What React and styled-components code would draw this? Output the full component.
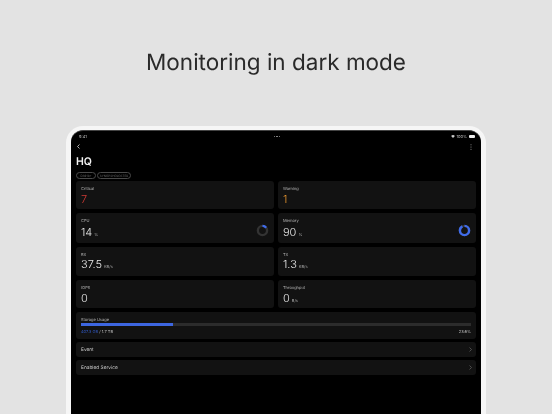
import React from "react";
import styled, { createGlobalStyle } from "styled-components";

const Global = createGlobalStyle`
  html, body { margin: 0; padding: 0; width: 552px; height: 414px; overflow: hidden; background: #e3e3e3; }
  * { box-sizing: border-box; }
  #root { width: 552px; height: 414px; overflow: hidden; text-rendering: geometricPrecision; }
`;

const Page = styled.div`
  width: 552px;
  height: 414px;
  overflow: hidden;
  display: flex;
  flex-direction: column;
  align-items: center;
  font-family: Inter, "Liberation Sans", sans-serif;
`;
const Heading = styled.h1`
  margin: 48px 0 0;
  height: 30px;
  font-size: 22.5px;
  line-height: 30px;
  font-weight: 400;
  letter-spacing: 0;
  color: #2a2a2a;
  will-change: opacity;
`;
const Bezel = styled.div`
  margin-top: 48px;
  width: 420px;
  height: 320px;
  flex: none;
  padding: 4px 5px 0;
  background: #f6f6f6;
  border-radius: 17px 17px 0 0;
`;
const Screen = styled.div`
  height: 100%;
  background: #000;
  border-radius: 12px 12px 0 0;
  border-top: 1px solid #444;
  padding: 0 5px;
  display: flex;
  flex-direction: column;
`;
const StatusBar = styled.div`
  height: 10px;
  padding: 1px 1px 0 3px;
  display: grid;
  grid-template-columns: 1fr auto 1fr;
  align-items: center;
  color: #bbb;
  font-size: 4px;
  will-change: opacity;
`;
const Dots = styled.div`
  display: flex;
  gap: 1px;
  & > i { width: 1.5px; height: 1.5px; border-radius: 50%; background: #999; }
`;
const StatusRight = styled.div`
  display: flex;
  align-items: center;
  justify-content: flex-end;
  gap: 1.5px;
`;
const Battery = styled.div`
  width: 6.5px;
  height: 3px;
  background: #eee;
  border-radius: 1px;
`;
const NavBar = styled.div`
  height: 10px;
  display: flex;
  align-items: center;
  justify-content: space-between;
  padding: 1px 4px 0 1px;
`;
const Title = styled.div`
  margin-top: 2px;
  height: 16px;
  font-size: 10.5px;
  line-height: 17px;
  font-weight: 600;
  color: #f2f2f2;
  will-change: opacity;
`;
const Chips = styled.div`
  margin-top: 3px;
  display: flex;
  gap: 1px;
  height: 7px;
  will-change: opacity;
`;
const Chip = styled.div`
  height: 7px;
  width: ${(p) => p.$w}px;
  text-align: center;
  border: 0.5px solid #4a4a4a;
  border-radius: 4px;
  color: #6a6a6a;
  font-size: 3px;
  line-height: 6px;
  white-space: nowrap;
`;
const Grid = styled.div`
  margin-top: 2px;
  display: grid;
  grid-template-columns: 198px 198px;
  grid-template-rows: 28px 30px 29px 28px;
  column-gap: 4px;
  row-gap: 4px;
`;
const Card = styled.div`
  background: #121212;
  border-radius: 3px;
  padding: 5px 5px 0;
  position: relative;
  display: flex;
  align-items: center;
  justify-content: space-between;
`;
const CardText = styled.div`
  align-self: flex-start;
  will-change: opacity;
`;
const Label = styled.div`
  font-size: 4px;
  line-height: 5px;
  color: #b5b5b5;
`;
const Value = styled.div`
  margin-top: ${(p) => p.$gap ?? 1}px;
  font-size: 11px;
  line-height: 14px;
  font-weight: 300;
  color: ${(p) => p.$color || "#e8e8e8"};
`;
const Unit = styled.span`
  margin-left: 2px;
  font-size: 4px;
  font-weight: 400;
  color: #aaa;
`;
const Wide = styled.div`
  margin-top: 4px;
  width: 400px;
  background: #121212;
  border-radius: 3px;
`;
const Storage = styled(Wide)`
  height: 27px;
  padding: 5px 5px 0;
`;
const StorageLabel = styled(Label)`
  will-change: opacity;
`;
const Track = styled.div`
  margin-top: 1px;
  height: 3px;
  background: #2c2c2c;
`;
const Fill = styled.div`
  height: 100%;
  background: #3d66e0;
`;
const StorageFoot = styled.div`
  margin-top: 3px;
  display: flex;
  justify-content: space-between;
  font-size: 4px;
  line-height: 5px;
  color: #bbb;
  will-change: opacity;
`;
const Used = styled.span`
  color: #2f55b8;
`;
const Row = styled(Wide)`
  height: 15px;
  padding: 0 4px 0 5px;
  display: flex;
  align-items: center;
  justify-content: space-between;
  margin-top: 3px;
`;
const RowLabel = styled.span`
  font-size: 4.8px;
  color: #cfcfcf;
  will-change: opacity;
`;

function Ring({ pct }) {
  const r = 4.6;
  const c = 2 * Math.PI * r;
  return (
    <svg width="13" height="13" viewBox="0 0 13 13">
      <circle cx="6.5" cy="6.5" r={r} fill="none" stroke="#333" strokeWidth="2.4" />
      <circle
        cx="6.5"
        cy="6.5"
        r={r}
        fill="none"
        stroke="#3f6bea"
        strokeWidth="2.4"
        strokeDasharray={`${(c * pct) / 100} ${c}`}
        transform="rotate(-90 6.5 6.5)"
      />
    </svg>
  );
}

const Chevron = ({ color = "#666", w = 3, h = 5 }) => (
  <svg width={w} height={h} viewBox="0 0 3 5">
    <path d="M.5.5 2.5 2.5.5 4.5" fill="none" stroke={color} strokeWidth=".7" />
  </svg>
);

export default function App() {
  return (
    <Page>
      <Global />
      <Heading>Monitoring in dark mode</Heading>
      <Bezel>
        <Screen>
          <StatusBar>
            <span>9:41</span>
            <Dots><i /><i /><i /></Dots>
            <StatusRight>
              <svg width="4" height="3" viewBox="0 0 5 4">
                <path d="M0 1.2C1.4-.2 3.6-.2 5 1.2L2.5 4Z" fill="#ccc" />
              </svg>
              <span>100%</span>
              <Battery />
            </StatusRight>
          </StatusBar>
          <NavBar>
            <svg width="3" height="5" viewBox="0 0 3 5">
              <path d="M2.5.5.5 2.5 2.5 4.5" fill="none" stroke="#ddd" strokeWidth=".8" />
            </svg>
            <svg width="2" height="6" viewBox="0 0 2 6">
              <circle cx="1" cy=".8" r=".5" fill="#aaa" />
              <circle cx="1" cy="3" r=".5" fill="#aaa" />
              <circle cx="1" cy="5.2" r=".5" fill="#aaa" />
            </svg>
          </NavBar>
          <Title>HQ</Title>
          <Chips>
            <Chip $w={20}>DS918+</Chip>
            <Chip $w={34}>SYNOPSHOLOSTER</Chip>
          </Chips>
          <Grid>
            <Card><CardText><Label>Critical</Label><Value $color="#d23a35">7</Value></CardText></Card>
            <Card><CardText><Label>Warning</Label><Value $color="#e8962f">1</Value></CardText></Card>
            <Card><CardText><Label>CPU</Label><Value $gap={2}>14<Unit>%</Unit></Value></CardText><Ring pct={14} /></Card>
            <Card><CardText><Label>Memory</Label><Value $gap={2}>90<Unit>%</Unit></Value></CardText><Ring pct={90} /></Card>
            <Card><CardText><Label>RX</Label><Value $gap={0}>37.5<Unit>KB/s</Unit></Value></CardText></Card>
            <Card><CardText><Label>TX</Label><Value $gap={0}>1.3<Unit>KB/s</Unit></Value></CardText></Card>
            <Card><CardText><Label>IOPS</Label><Value>0</Value></CardText></Card>
            <Card><CardText><Label>Throughput</Label><Value>0<Unit>B/s</Unit></Value></CardText></Card>
          </Grid>
          <Storage>
            <StorageLabel>Storage Usage</StorageLabel>
            <Track><Fill style={{ width: "23.6%" }} /></Track>
            <StorageFoot>
              <span><Used>407.3 GB</Used> / 1.7 TB</span>
              <span>23.6%</span>
            </StorageFoot>
          </Storage>
          <Row><RowLabel>Event</RowLabel><Chevron /></Row>
          <Row><RowLabel>Enabled Service</RowLabel><Chevron /></Row>
        </Screen>
      </Bezel>
    </Page>
  );
}
